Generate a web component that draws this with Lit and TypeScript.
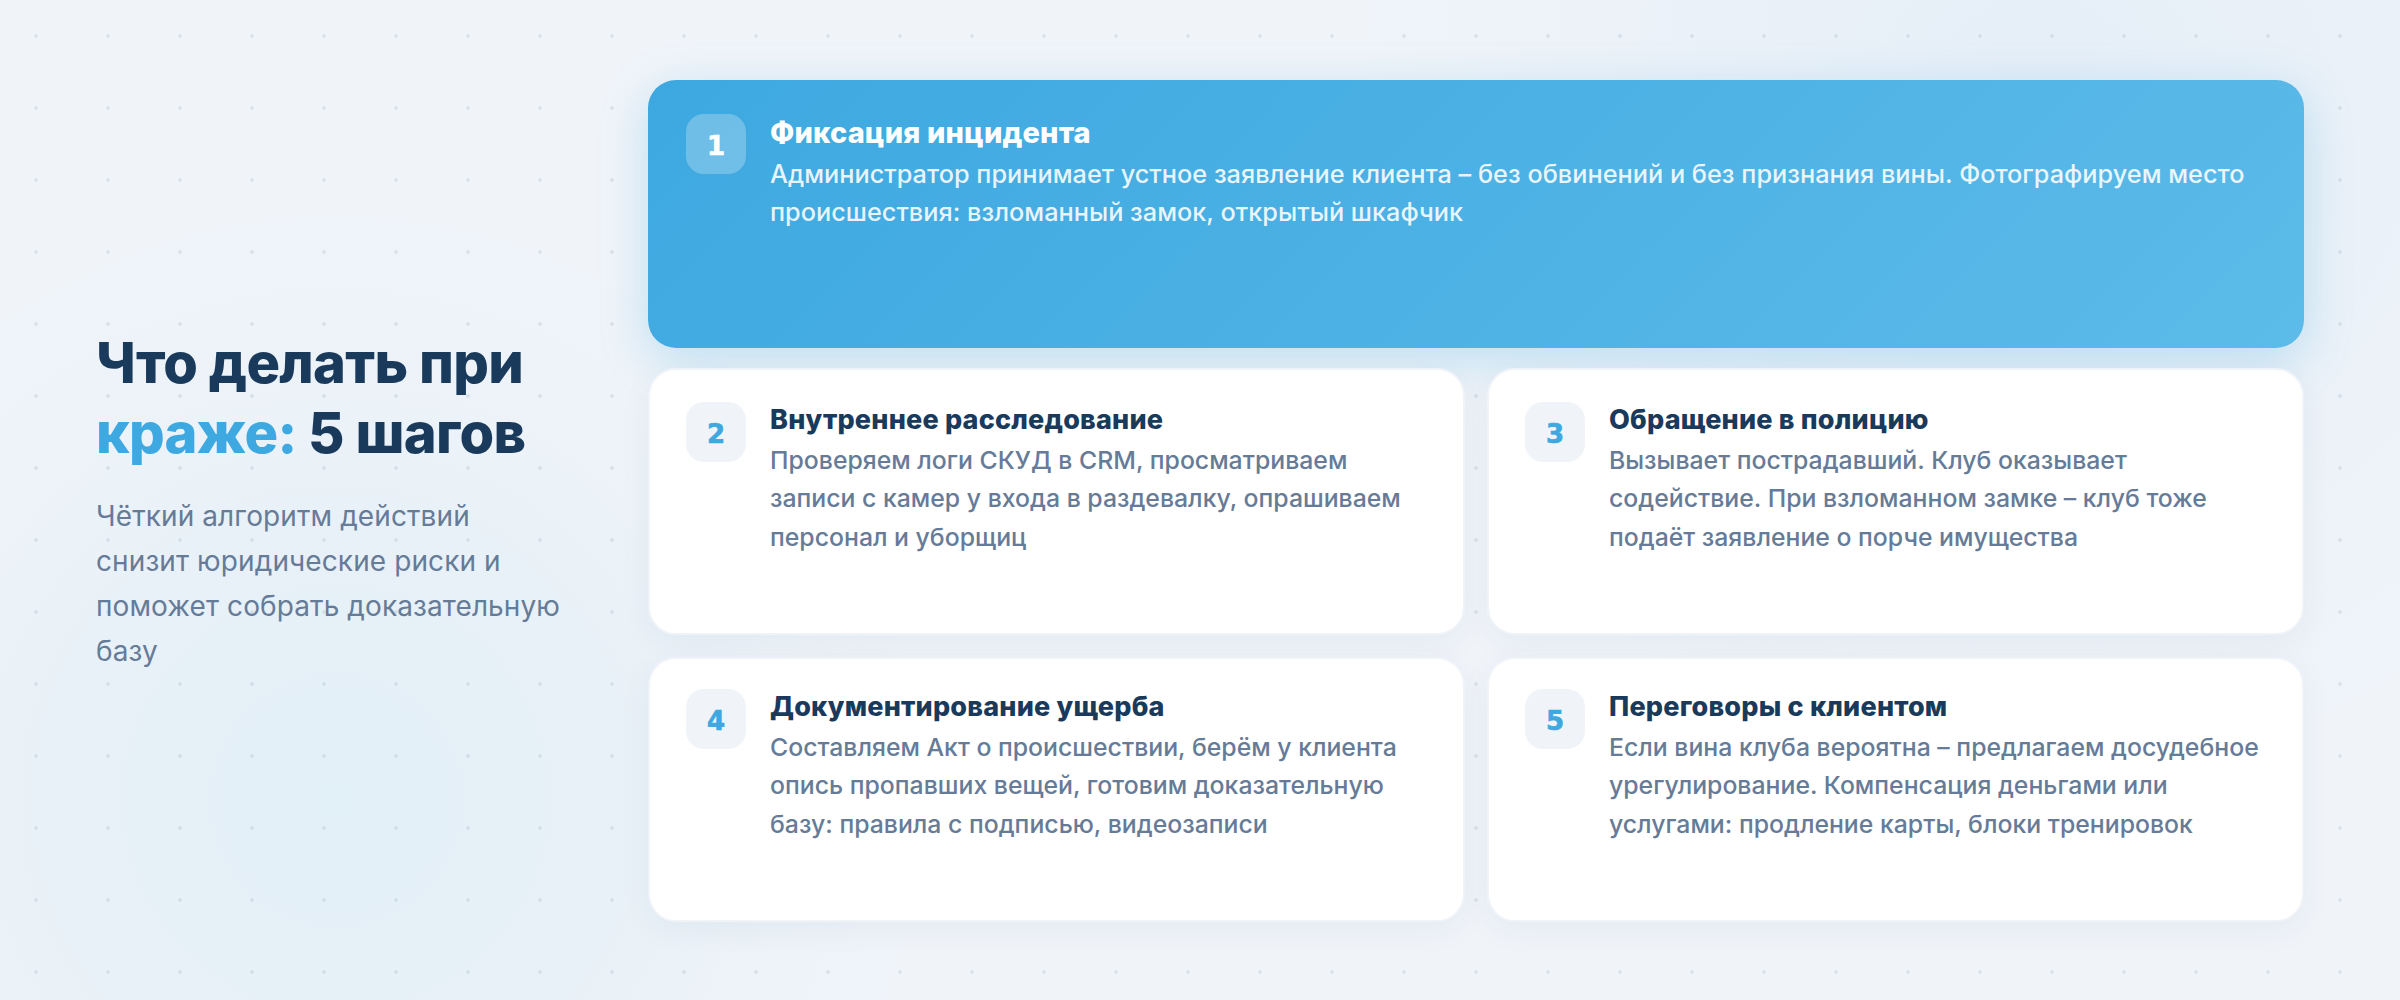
import { LitElement, html, css } from "lit";
import { customElement } from "lit/decorators.js";

const steps = [
  { n: 1, t: "Фиксация инцидента", d: "Администратор принимает устное заявление клиента – без обвинений и без признания вины. Фотографируем место происшествия: взломанный замок, открытый шкафчик" },
  { n: 2, t: "Внутреннее расследование", d: "Проверяем логи СКУД в CRM, просматриваем записи с камер у входа в раздевалку, опрашиваем персонал и уборщиц" },
  { n: 3, t: "Обращение в полицию", d: "Вызывает пострадавший. Клуб оказывает содействие. При взломанном замке – клуб тоже подаёт заявление о порче имущества" },
  { n: 4, t: "Документирование ущерба", d: "Составляем Акт о происшествии, берём у клиента опись пропавших вещей, готовим доказательную базу: правила с подписью, видеозаписи" },
  { n: 5, t: "Переговоры с клиентом", d: "Если вина клуба вероятна – предлагаем досудебное урегулирование. Компенсация деньгами или услугами: продление карты, блоки тренировок" },
];

@customElement("app-root")
export class AppRoot extends LitElement {
  static styles = css`
    :host {
      display: block;
      width: 2400px;
      height: 1000px;
      overflow: hidden;
      font-family: Inter, "Noto Sans", sans-serif;
      background:
        radial-gradient(circle, rgba(100, 125, 150, 0.17) 1.3px, transparent 2.2px) 0 0 / 72px 72px,
        radial-gradient(circle at 14% 80%, rgba(56, 185, 225, 0.08), rgba(56, 170, 225, 0.04) 280px, transparent 600px),
        radial-gradient(circle at 85% 10%, rgba(56, 150, 225, 0.06), transparent 700px),
        #f0f4f9;
    }
    .page {
      box-sizing: border-box;
      height: 1000px;
      padding: 80px 96px;
      display: grid;
      grid-template-columns: 480px 1fr;
      column-gap: 72px;
    }
    .intro { align-self: center; }
    h1 {
      margin: 0 0 26px;
      font-size: 56px;
      line-height: 70px;
      font-weight: 800;
      letter-spacing: -0.7px;
      color: #1a3a5c;
    }
    h1 em { font-style: normal; color: #3ea9e0; }
    .lead {
      margin: 0;
      max-width: 468px;
      font-size: 28px;
      line-height: 44.8px;
      letter-spacing: 0.1px;
      color: #667b97;
    }
    .grid {
      display: grid;
      grid-template-columns: 1fr 1fr;
      grid-template-rows: 268px 267px 267px;
      gap: 20px 22px;
      align-content: start;
    }
    .card {
      box-sizing: border-box;
      display: flex;
      gap: 24px;
      padding: 32px 36px;
      border-radius: 28px;
      background: #fff;
      border: 2px solid #f0f4f9;
      box-shadow: 0 8px 32px rgba(26, 58, 92, 0.05);
    }
    .card.low { margin-top: 2px; padding-top: 30px; }
    .card.hero {
      grid-column: 1 / -1;
      border: 0;
      padding: 34px 38px;
      background: linear-gradient(135deg, #3da8e0, #5cbbe9);
      box-shadow: 0 12px 48px rgba(61, 168, 224, 0.28);
    }
    .num {
      flex: none;
      box-sizing: border-box;
      width: 60px;
      height: 60px;
      padding-top: 4px;
      border-radius: 18px;
      display: flex;
      align-items: center;
      justify-content: center;
      background: #f0f4f9;
      color: #3ea9e0;
      font-family: "DejaVu Sans", sans-serif;
      font-size: 26px;
      font-weight: 700;
      -webkit-text-stroke: 0.7px currentColor;
    }
    .hero .num { background: rgba(255, 255, 255, 0.25); color: #fff; }
    h3 {
      margin: 0 0 3px;
      font-size: 27px;
      line-height: 36px;
      font-weight: 800;
      letter-spacing: 0.2px;
      color: #1a3a5c;
    }
    .hero h3 { color: #fff; font-size: 29px; letter-spacing: 0.15px; margin: 1px 0 4px; }
    p.body {
      margin: 0;
      font-size: 24.8px;
      line-height: 38.4px;
      font-weight: 500;
      color: #667b97;
    }
    .hero p.body { color: rgba(255, 255, 255, 0.88); font-size: 25.3px; }
  `;

  render() {
    return html`
      <div class="page">
        <div class="intro">
          <h1>Что делать при <em>краже:</em> 5 шагов</h1>
          <p class="lead">Чёткий алгоритм действий снизит юридические риски и поможет собрать доказательную базу</p>
        </div>
        <div class="grid">
          ${steps.map(
            (s, i) => html`
              <div class="card ${i === 0 ? "hero" : ""} ${i > 2 ? "low" : ""}">
                <div class="num">${s.n}</div>
                <div>
                  <h3>${s.t}</h3>
                  <p class="body">${s.d}</p>
                </div>
              </div>
            `
          )}
        </div>
      </div>
    `;
  }
}
